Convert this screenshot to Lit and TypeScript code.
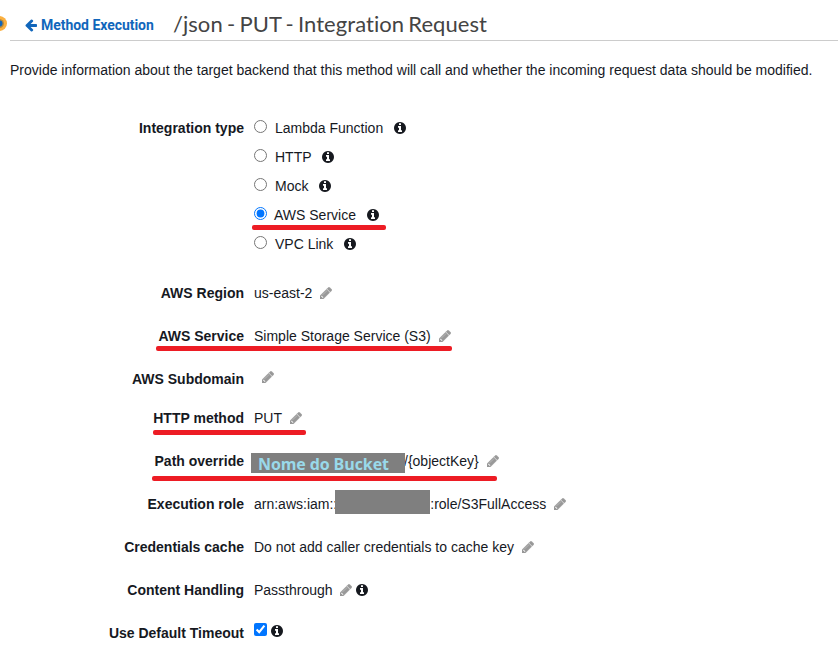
import { LitElement, html, css, svg, nothing } from "lit";
import { customElement, property } from "lit/decorators.js";

const PATHS: Record<string, { box: string; d: string }> = {
  arrow: {
    box: "0 0 1536 1792",
    d: "M1536 896v128q0 53-32.5 90.5t-84.5 37.5h-704l293 294q38 36 38 90t-38 90l-75 76q-37 37-90 37-52 0-91-37l-651-652q-37-37-37-90 0-52 37-91l651-650q38-38 91-38 52 0 90 38l75 74q38 38 38 91t-38 91l-293 293h704q52 0 84.5 37.5t32.5 90.5z",
  },
  info: {
    box: "128 128 1536 1536",
    d: "M1152 1376v-160q0-14-9-23t-23-9h-96v-512q0-14-9-23t-23-9h-320q-14 0-23 9t-9 23v160q0 14 9 23t23 9h96v320h-96q-14 0-23 9t-9 23v160q0 14 9 23t23 9h448q14 0 23-9t9-23zm-128-896v-160q0-14-9-23t-23-9h-192q-14 0-23 9t-9 23v160q0 14 9 23t23 9h192q14 0 23-9t9-23zm640 416q0 209-103 385.5t-279.5 279.5-385.5 103-385.5-103-279.5-279.5-103-385.5 103-385.5 279.5-279.5 385.5-103 385.5 103 279.5 279.5 103 385.5z",
  },
  pencil: {
    box: "128 128 1536 1536",
    d: "M491 1536l91-91-235-235-91 91v107h128v128h107zm523-928q0-22-22-22-10 0-17 7l-542 542q-7 7-7 17 0 22 22 22 10 0 17-7l542-542q7-7 7-17zm-54-192l416 416-832 832h-416v-416zm683 96q0 53-37 90l-166 166-416-416 166-165q36-38 90-38 53 0 91 38l235 234q37 39 37 91z",
  },
};

@customElement("fa-icon")
export class FaIcon extends LitElement {
  @property() name = "info";
  static styles = css`
    :host { display: block; flex: none; width: 12px; height: 12px; }
    :host([name="arrow"]) { height: 14px; color: #1166bb; }
    :host([name="info"]) { color: #16191f; }
    :host([name="pencil"]) { color: #999; }
    svg { display: block; width: 100%; height: 100%; fill: currentColor; }
    :host([name="pencil"]) svg { stroke: currentColor; stroke-width: 50; }
  `;
  render() {
    const icon = PATHS[this.name];
    return html`<svg viewBox=${icon.box}>${svg`<path d=${icon.d}></path>`}</svg>`;
  }
}

@customElement("app-root")
export class AppRoot extends LitElement {
  static styles = css`
    :host {
      display: block; height: 648px; overflow: hidden; position: relative;
      background: #fff; color: #16191f;
      font: 14px/20px "Liberation Sans", Arial, sans-serif;
    }
    header {
      display: flex; align-items: center; height: 40px; margin-left: 10px;
      border-bottom: 1px solid #ccc; white-space: nowrap;
    }
    .dot { position: absolute; left: -8px; top: 16px; width: 15px; height: 15px; }
    .back {
      display: flex; align-items: center; gap: 4px; width: 133px; margin: 10px 0 0 15px;
      font: 700 14px/20px Roboto, sans-serif; letter-spacing: -0.04px; color: #1166bb;
    }
    h1 {
      margin: 7px 0 0 15px; font: 400 22px/28px Lato, sans-serif; color: #444;
      font-variant-ligatures: none; letter-spacing: 0.04px; word-spacing: -1.4px;
    }
    .intro { margin: 19px 0 38px 10px; white-space: nowrap; }
    .row { display: flex; gap: 10px; height: 43px; white-space: nowrap; }
    .row.types { height: 165px; }
    .row.short { height: 39px; }
    .label { width: 244px; flex: none; text-align: right; font-weight: 700; }
    .value { display: flex; align-items: center; height: 20px; gap: 8px; }
    .options { display: flex; flex-direction: column; gap: 9px; }
    .option { display: flex; align-items: center; height: 20px; }
    .option fa-icon { margin-left: 10.7px; }
    .option .name { margin-left: 8px; }
    .option.on .name { margin-left: 7px; }
    input { margin: 0; width: 13px; height: 13px; flex: none; position: relative; top: -2px; }
    .value.blank { padding-left: 8px; margin-top: -2px; }
    .value.handling { gap: 7px; }
    .value.handling fa-icon + fa-icon { margin-left: -3px; }
    .value.timeout { gap: 4px; margin-top: -2px; }
    .path { display: flex; align-items: center; margin-left: -3px; }
    .mask {
      width: 154px; height: 20px; box-sizing: border-box; padding-left: 7px; margin: 4px -1px 0 0;
      position: relative; z-index: 1;
      background: #7f7f7f; color: #99d9ea; font: 700 16px/22px "Open Sans", sans-serif;
      letter-spacing: -0.1px;
    }
    .role { display: flex; align-items: center; }
    .hidden { width: 95px; height: 24px; margin: -4px 0 0 -2px; background: #7f7f7f; position: relative; }
    .mark { position: absolute; height: 5px; border-radius: 2px; background: #ed1c24; }
    .m1 { left: 252px; top: 225px; width: 134px; }
    .m2 { left: 156px; top: 346px; width: 296px; }
    .m3 { left: 153px; top: 430px; width: 153px; }
    .m4 { left: 152px; top: 476px; width: 345px; }
  `;

  private row(label: string, value: unknown, rowClass = "", valueClass = "", pencil = true) {
    return html`<div class="row ${rowClass}">
      <div class="label"><span>${label}</span></div>
      <div class="value ${valueClass}">${value}${pencil ? html`<fa-icon name="pencil"></fa-icon>` : nothing}</div>
    </div>`;
  }

  render() {
    const types = ["Lambda Function", "HTTP", "Mock", "AWS Service", "VPC Link"];
    const info = html`<fa-icon name="info"></fa-icon>`;
    return html`
      <svg class="dot" viewBox="0 0 15 15">
        <circle cx="7.5" cy="7.5" r="7.5" fill="#fbb040"></circle>
        <circle cx="7.5" cy="7.5" r="4.5" fill="#b98a3c"></circle>
        <circle cx="7.5" cy="7.5" r="3" fill="#1166bb"></circle>
      </svg>
      <header>
        <div class="back"><fa-icon name="arrow"></fa-icon><span>Method Execution</span></div>
        <h1><span>/json - PUT - Integration Request</span></h1>
      </header>
      <div class="intro"><span>Provide information about the target backend that this method will call and whether the incoming request data should be modified.</span></div>
      <div class="row types">
        <div class="label"><span>Integration type</span></div>
        <div class="options">
          ${types.map((t) => html`<label class="option ${t === "AWS Service" ? "on" : ""}">
            <input type="radio" name="type" .checked=${t === "AWS Service"} /><span class="name">${t}</span>${info}
          </label>`)}
        </div>
      </div>
      ${this.row("AWS Region", html`<span>us-east-2</span>`)}
      ${this.row("AWS Service", html`<span>Simple Storage Service (S3)</span>`)}
      ${this.row("AWS Subdomain", nothing, "short", "blank")}
      ${this.row("HTTP method", html`<span>PUT</span>`)}
      ${this.row("Path override", html`<div class="path"><div class="mask">Nome do Bucket</div><span>/{objectKey}</span></div>`)}
      ${this.row("Execution role", html`<div class="role"><span>arn:aws:iam::</span><div class="hidden"></div><span>:role/S3FullAccess</span></div>`)}
      ${this.row("Credentials cache", html`<span>Do not add caller credentials to cache key</span>`)}
      ${this.row("Content Handling", html`<span>Passthrough</span><fa-icon name="pencil"></fa-icon>${info}`, "", "handling", false)}
      ${this.row("Use Default Timeout", html`<input type="checkbox" .checked=${true} />${info}`, "", "timeout", false)}
      <div class="mark m1"></div><div class="mark m2"></div>
      <div class="mark m3"></div><div class="mark m4"></div>
    `;
  }
}
